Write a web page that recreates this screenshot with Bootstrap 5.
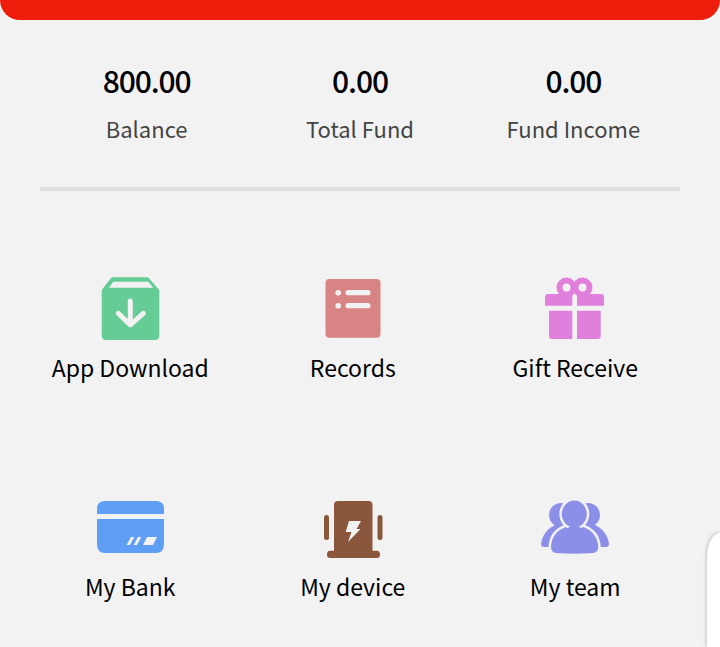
<!DOCTYPE html>
<html lang="en">
<head>
<meta charset="UTF-8" />
<meta name="viewport" content="width=device-width, initial-scale=1.0" />
<title>Mine</title>
<link href="https://cdn.jsdelivr.net/npm/bootstrap@5.3.0/dist/css/bootstrap.min.css" rel="stylesheet" />
<style>
  html, body { height: 100%; }
  body { font-family: "Noto Sans CJK SC", "Noto Sans", sans-serif; background: #f2f2f2; color: #000; overflow: hidden; }
  .top-banner { height: 20px; background: #ee1c0a; border-radius: 0 0 26px 26px; }
  .stats-row { margin: 0 40px; height: 171px; border-bottom: 4px solid #dfe0df; padding-top: 41px; }
  .stat-num { font-size: 30px; line-height: 38px; font-weight: 500; letter-spacing: -1.1px; }
  .stat-label { font-size: 22px; line-height: 30px; color: #444; margin-top: 14px; }
  .menu-grid { display: grid; grid-template-columns: repeat(3, 222.5px); margin-left: 19px; }
  .menu-item { height: 219px; padding-top: 85px; }
  .menu-icon { height: 64px; }
  .menu-label { font-size: 23px; line-height: 32px; margin-top: 11px; white-space: nowrap; }
  .float-panel { position: absolute; right: 0; bottom: 0; width: 13px; height: 114px; background: #fff; border-top-left-radius: 13px 24px; box-shadow: 0 0 4px rgba(0,0,0,.3); }
</style>
</head>
<body>

<div class="top-banner"></div>

<div class="stats-row d-flex text-center">
  <div class="flex-fill w-100">
    <div class="stat-num">800.00</div>
    <div class="stat-label">Balance</div>
  </div>
  <div class="flex-fill w-100">
    <div class="stat-num">0.00</div>
    <div class="stat-label">Total Fund</div>
  </div>
  <div class="flex-fill w-100">
    <div class="stat-num">0.00</div>
    <div class="stat-label">Fund Income</div>
  </div>
</div>

<div class="menu-grid text-center">
  <div class="menu-item">
    <svg class="menu-icon" width="60" height="64" viewBox="0 0 60 64">
      <path d="M11.700 1.300H48L59.300 14V59Q59.300 64 55 64H6Q1.700 64 1.700 59V14Z" fill="#66cc96"/>
      <path d="M13.300 5.700H48.300L53.300 11.700H9Z" fill="#f2f2f2"/>
      <path d="M30.300 25V48M18.300 37.300L30.300 49L43.300 37.300" fill="none" stroke="#f2f2f2" stroke-width="5" stroke-linecap="round" stroke-linejoin="round"/>
    </svg>
    <div class="menu-label">App Download</div>
  </div>
  <div class="menu-item">
    <svg class="menu-icon" width="56" height="64" viewBox="0 0 56 64">
      <rect x="0.500" y="3" width="55" height="58.700" rx="4" fill="#d98484"/>
      <circle cx="13.200" cy="16.700" r="2.800" fill="#f2f2f2"/>
      <circle cx="13.200" cy="29.700" r="2.800" fill="#f2f2f2"/>
      <rect x="20.500" y="14" width="25" height="5.300" rx="2.650" fill="#f2f2f2"/>
      <rect x="20.500" y="27" width="25" height="5.300" rx="2.650" fill="#f2f2f2"/>
    </svg>
    <div class="menu-label">Records</div>
  </div>
  <div class="menu-item">
    <svg class="menu-icon" width="60" height="64" viewBox="0 0 60 64">
      <circle cx="21.500" cy="11.500" r="7" fill="none" stroke="#e07fdc" stroke-width="6"/>
      <circle cx="37.500" cy="11.500" r="7" fill="none" stroke="#e07fdc" stroke-width="6"/>
      <path d="M0 21Q0 18 3 18H27.300V29.700H0ZM32 18H56Q59 18 59 21V29.700H32Z" fill="#e07fdc"/>
      <path d="M4 34.700H27.300V63H7Q4 63 4 60ZM32 34.700H55.700V60Q55.700 63 52.700 63H32Z" fill="#e07fdc"/>
    </svg>
    <div class="menu-label">Gift Receive</div>
  </div>
  <div class="menu-item">
    <svg class="menu-icon" width="68" height="64" viewBox="0 0 68 64">
      <path d="M9 6H60Q68 6 68 14V19H1V14Q1 6 9 6Z" fill="#5e9ff5"/>
      <path d="M1 24H68V49Q68 58 60 58H9Q1 58 1 49Z" fill="#5e9ff5"/>
      <path d="M30.600 50L35 42H38.300L33.900 50ZM37.700 50L42 42H45.300L41 50ZM47 50L51 42H61L57 50Z" fill="#f2f2f2"/>
    </svg>
    <div class="menu-label">My Bank</div>
  </div>
  <div class="menu-item">
    <svg class="menu-icon" width="60" height="64" viewBox="0 0 60 64">
      <path d="M11 10Q11 6 15 6H45.500Q49.500 6 49.500 10V55.700H54Q57 55.700 57 59.500Q57 63 54 63H7Q4 63 4 59.500Q4 55.700 7 55.700H11Z" fill="#8b573c"/>
      <rect x="1" y="20" width="5" height="25" rx="2.500" fill="#8b573c"/>
      <rect x="54.500" y="20" width="5" height="25" rx="2.500" fill="#8b573c"/>
      <path d="M26 26H38L33.500 34H37.500L25 47L28.500 37H22.700Z" fill="#f2f2f2"/>
    </svg>
    <div class="menu-label">My device</div>
  </div>
  <div class="menu-item">
    <svg class="menu-icon" width="68" height="64" viewBox="0 0 68 64">
      <circle cx="20" cy="20" r="12" fill="#8c8fe8"/>
      <circle cx="47" cy="20" r="12" fill="#8c8fe8"/>
      <path d="M0 49Q2 35 16 29H52Q66 35 68 49Q68 52 64.500 52H3.500Q0 52 0 49Z" fill="#8c8fe8"/>
      <path d="M10 52Q11 33 33.500 30Q56 33 57.300 52Q57 57.500 52 58Q33 59.500 15 58Q10 57.500 10 52Z" fill="#8c8fe8" stroke="#f2f2f2" stroke-width="5" paint-order="stroke"/>
      <ellipse cx="33.300" cy="19" rx="12.500" ry="13.500" fill="#8c8fe8" stroke="#f2f2f2" stroke-width="5" paint-order="stroke"/>
      <path d="M14 52Q15 36 33.500 30Q52 36 53 52Z" fill="#8c8fe8"/>
    </svg>
    <div class="menu-label">My team</div>
  </div>
</div>

<div class="float-panel"></div>

<script src="https://cdn.jsdelivr.net/npm/bootstrap@5.3.0/dist/js/bootstrap.bundle.min.js"></script>
</body>
</html>
